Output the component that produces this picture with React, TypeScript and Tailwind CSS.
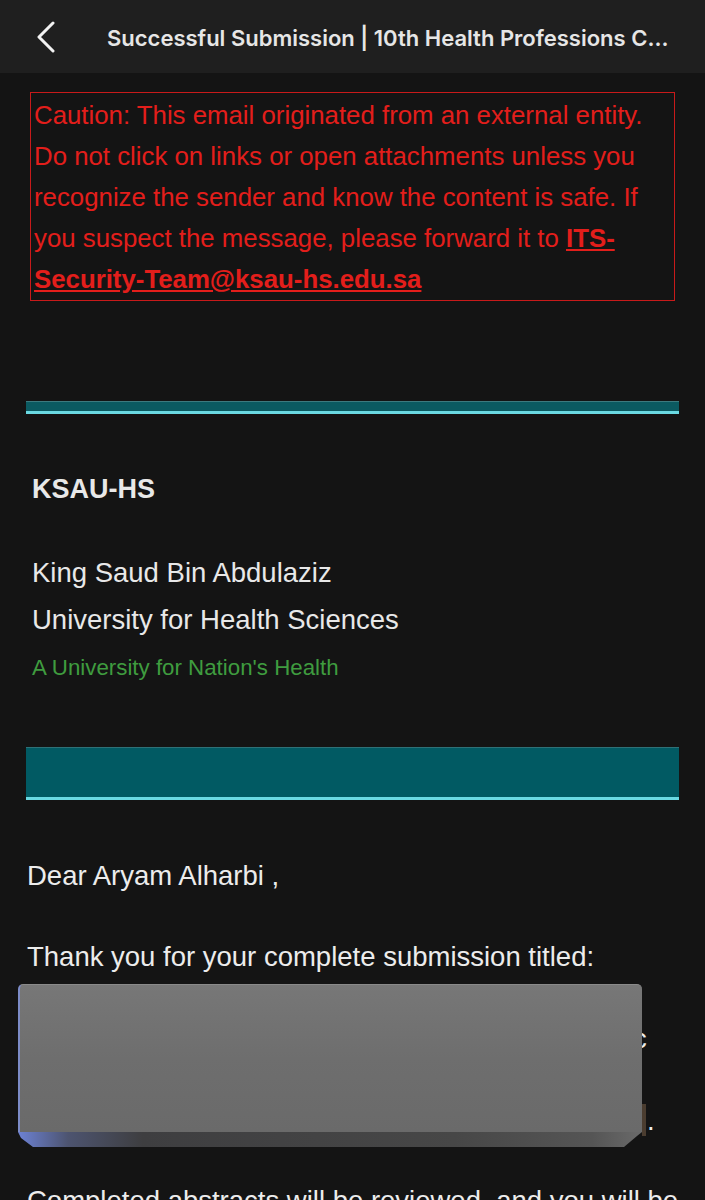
import React from "react";

export default function App() {
  return (
    <div className="w-[705px] h-[1200px] overflow-hidden bg-[#141414] font-['Liberation_Sans',Arial,sans-serif]">
      {/* Header */}
      <div className="h-[73px] bg-[#1f1f1f] flex items-center">
        <div className="w-[107px] pl-[36px] flex items-center">
          <svg width="22" height="32" viewBox="0 0 22 32" fill="none">
            <path d="M17 2 L3 16 L17 30" stroke="#f2f2f2" strokeWidth="3" strokeLinecap="round" strokeLinejoin="round" />
          </svg>
        </div>
        <div className="font-['Inter',sans-serif] font-semibold text-[22px] leading-[28px] text-[#e6e6e6] whitespace-nowrap pt-[2px]">
          Successful Submission | 10th Health Professions C...
        </div>
      </div>

      {/* Caution box */}
      <div className="mt-[19px] ml-[30px] w-[645px] h-[209px] border border-[#c81a1a] pl-[3px] pt-[2px] text-[25.8px] leading-[41px] text-[#e31e1b] whitespace-nowrap">
        <div>Caution: This email originated from an external entity.</div>
        <div>Do not click on links or open attachments unless you</div>
        <div>recognize the sender and know the content is safe. If</div>
        <div>
          you suspect the message, please forward it to{" "}
          <span className="font-bold underline">ITS-</span>
        </div>
        <div>
          <span className="font-bold underline">Security-Team@ksau-hs.edu.sa</span>
        </div>
      </div>

      {/* Bar 1 */}
      <div className="mt-[100px] ml-[26px] w-[653px] flex flex-col">
        <div className="h-[1px] bg-[#3d7a7f]" />
        <div className="h-[9px] bg-[#0b5a61]" />
        <div className="h-[3px] bg-[#6ad9e2]" />
      </div>

      {/* Institution */}
      <div className="ml-[32px] mt-[59px] text-[27px] leading-[32px] font-bold text-[#e8e8e8]">KSAU-HS</div>
      <div className="ml-[32px] mt-[44px] text-[27.5px] leading-[47px] text-[#e8e8e8]">
        <div>King Saud Bin Abdulaziz</div>
        <div>University for Health Sciences</div>
      </div>
      <div className="ml-[32px] mt-[10px] text-[22.3px] leading-[30px] text-[#3f9c3f]">A University for Nation's Health</div>

      {/* Bar 2 */}
      <div className="mt-[64px] ml-[26px] w-[653px] flex flex-col">
        <div className="h-[1px] bg-[#2f7177]" />
        <div className="h-[49px] bg-[#015a63]" />
        <div className="h-[3px] bg-[#6ad9e2]" />
      </div>

      {/* Body */}
      <div className="ml-[27px] mt-[58px] text-[27.5px] leading-[36px] text-[#ececec]">Dear Aryam Alharbi ,</div>
      <div className="ml-[27px] mt-[45px] text-[27.5px] leading-[36px] text-[#ececec] whitespace-nowrap">
        Thank you for your complete submission titled:
      </div>

      {/* Redacted title */}
      <div className="relative h-[208px]">
        <span className="absolute left-[633px] top-[46px] text-[27.5px] leading-[36px] text-[#ececec]">c</span>
        <div className="absolute left-[642px] top-[129px] w-[4px] h-[32px] bg-[#4b3d30]" />
        <span className="absolute left-[647px] top-[128px] text-[27.5px] leading-[36px] text-[#ececec]">.</span>
        <div className="absolute left-[18px] top-[9px] w-[624px] h-[148px] rounded-t-[5px] bg-gradient-to-b from-[#777777] via-[#6e6e6e] to-[#6a6a6a] border-l-2 border-t border-l-[#7d8cc8] border-t-[#8a8a8a]" />
        <svg className="absolute left-[18px] top-[157px]" width="624" height="15" viewBox="0 0 624 15">
          <defs>
            <linearGradient id="bev" x1="0" y1="0" x2="1" y2="0">
              <stop offset="0" stopColor="#6d82d4" />
              <stop offset="0.08" stopColor="#4d5470" />
              <stop offset="0.2" stopColor="#3e3e40" />
              <stop offset="0.7" stopColor="#474747" />
              <stop offset="0.92" stopColor="#555555" />
              <stop offset="1" stopColor="#6a6a6a" />
            </linearGradient>
          </defs>
          <polygon points="0,0 624,0 619,4 606,15 15,15 3,6" fill="url(#bev)" />
        </svg>
      </div>

      <div className="ml-[27px] text-[27.5px] leading-[36px] text-[#ececec] whitespace-nowrap">
        Completed abstracts will be reviewed, and you will be
      </div>
    </div>
  );
}
